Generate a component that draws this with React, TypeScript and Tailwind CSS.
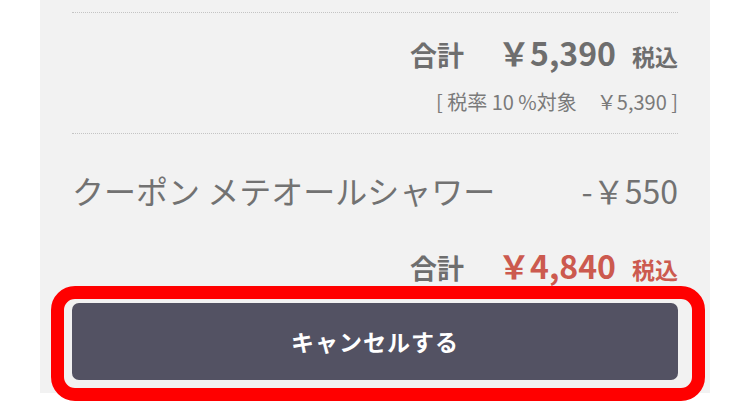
import React from "react";

export default function App() {
  const font = { fontFamily: '"Noto Sans CJK JP", "Noto Sans", sans-serif' };
  return (
    <div className="relative w-[750px] h-[419px] bg-white overflow-hidden" style={font}>
      <div className="ml-[40px] w-[670px] bg-[#f2f2f2] px-[32px] pt-[12px] pb-[13px] flex flex-col">
        <div className="border-t border-dotted border-[#c4c4c4]" />
        <div className="mt-[23px] h-[32px] flex items-baseline justify-end text-[#6e6e6e] font-bold leading-[32px]">
          <span className="text-[27px]">合計</span>
          <span className="ml-[34px] text-[32px]">￥5,390</span>
          <span className="ml-[16px] text-[23px]">税込</span>
        </div>
        <div className="mt-[22px] h-[24px] flex justify-end text-[20px] leading-[24px] text-[#7a7a7a]">
          <span>[ 税率 10 %対象　￥5,390 ]</span>
        </div>
        <div className="mt-[19px] border-t border-dotted border-[#c4c4c4]" />
        <div className="mt-[36px] h-[40px] flex items-center justify-between text-[#727272] leading-[40px]">
          <span className="text-[32px]">クーポン メテオールシャワー</span>
          <span className="text-[32px]">-￥550</span>
        </div>
        <div className="mt-[39px] h-[32px] flex items-baseline justify-end font-bold leading-[32px]">
          <span className="text-[27px] text-[#6e6e6e]">合計</span>
          <span className="ml-[34px] text-[32px] text-[#cc5a4f]">￥4,840</span>
          <span className="ml-[16px] text-[23px] text-[#cc5a4f]">税込</span>
        </div>
        <button className="mt-[22px] h-[77px] w-full rounded-[7px] bg-[#535263] text-white font-bold text-[23px] tracking-[1px]">
          キャンセルする
        </button>
      </div>
      <div className="absolute left-[51px] top-[286px] w-[654px] h-[115px] border-[13px] border-[#ff0000] rounded-[24px] pointer-events-none" />
    </div>
  );
}
